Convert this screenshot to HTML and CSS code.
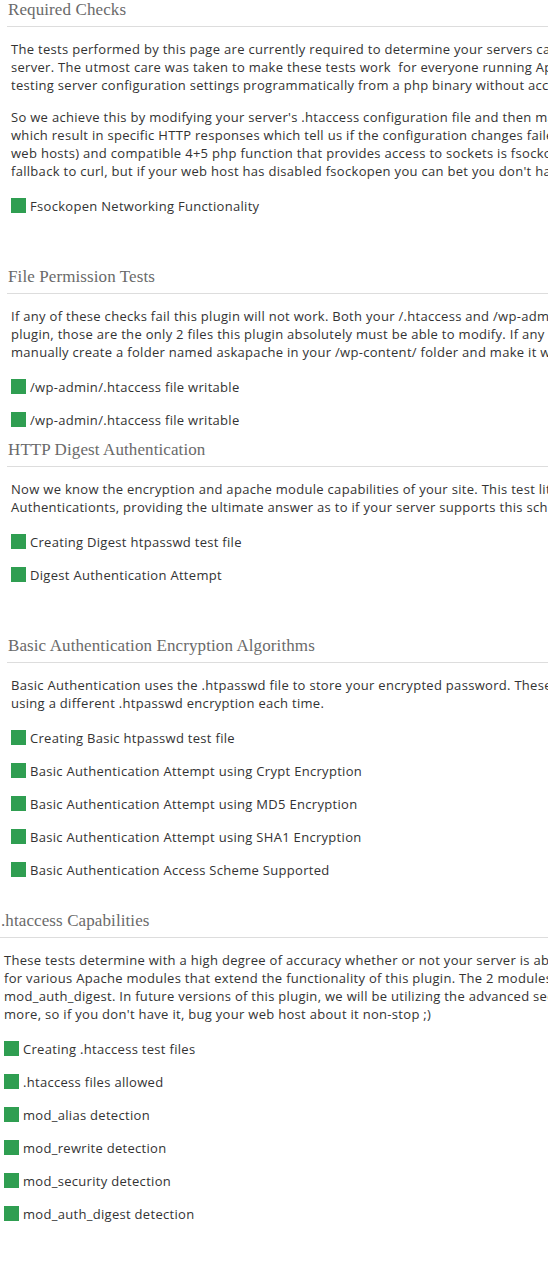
FILE: index.html
```html
<!DOCTYPE html>
<html lang="en">
<head>
<meta charset="utf-8">
<title>AskApache Password Protect Tests</title>
<link rel="stylesheet" href="styles.css">
</head>
<body>
<div class="page">

  <section class="section">
    <h3 class="section-title">Required Checks</h3>
    <p class="para">The tests performed by this page are currently required to determine your servers capabilities to make sure that AskApache Password Protect will work on your<br>server. The utmost care was taken to make these tests work&nbsp; for everyone running Apache, no matter what host or configuration you are using, by<br>testing server configuration settings programmatically from a php binary without access to the main server configuration files.</p>
    <p class="para">So we achieve this by modifying your server's .htaccess configuration file and then making special HTTP requests to your server<br>which result in specific HTTP responses which tell us if the configuration changes failed or succeeded. (Not available on all<br>web hosts) and compatible 4+5 php function that provides access to sockets is fsockopen, which is required. This plugin will<br>fallback to curl, but if your web host has disabled fsockopen you can bet you don't have curl either.</p>
    <ul class="checks">
      <li class="check"><span class="box"></span>Fsockopen Networking Functionality</li>
    </ul>
  </section>

  <section class="section section--tight">
    <h3 class="section-title">File Permission Tests</h3>
    <p class="para">If any of these checks fail this plugin will not work. Both your /.htaccess and /wp-admin/.htaccess files must be writable for this<br>plugin, those are the only 2 files this plugin absolutely must be able to modify. If any of the checks fail you will need to<br>manually create a folder named askapache in your /wp-content/ folder and make it writable by the server.</p>
    <ul class="checks">
      <li class="check"><span class="box"></span>/wp-admin/.htaccess file writable</li>
      <li class="check"><span class="box"></span>/wp-admin/.htaccess file writable</li>
    </ul>
  </section>

  <section class="section">
    <h3 class="section-title">HTTP Digest Authentication</h3>
    <p class="para">Now we know the encryption and apache module capabilities of your site. This test literally attempts multiple Digest<br>Authenticationts, providing the ultimate answer as to if your server supports this scheme.</p>
    <ul class="checks">
      <li class="check"><span class="box"></span>Creating Digest htpasswd test file</li>
      <li class="check"><span class="box"></span>Digest Authentication Attempt</li>
    </ul>
  </section>

  <section class="section section--mid">
    <h3 class="section-title">Basic Authentication Encryption Algorithms</h3>
    <p class="para">Basic Authentication uses the .htpasswd file to store your encrypted password. These checks perform an authentication attempt<br>using a different .htpasswd encryption each time.</p>
    <ul class="checks">
      <li class="check"><span class="box"></span>Creating Basic htpasswd test file</li>
      <li class="check"><span class="box"></span>Basic Authentication Attempt using Crypt Encryption</li>
      <li class="check"><span class="box"></span>Basic Authentication Attempt using MD5 Encryption</li>
      <li class="check"><span class="box"></span>Basic Authentication Attempt using SHA1 Encryption</li>
      <li class="check"><span class="box"></span>Basic Authentication Access Scheme Supported</li>
    </ul>
  </section>

  <section class="section section--outdent">
    <h3 class="section-title">.htaccess Capabilities</h3>
    <p class="para">These tests determine with a high degree of accuracy whether or not your server is able to handle .htaccess files and also checks<br>for various Apache modules that extend the functionality of this plugin. The 2 modules that are required are mod_rewrite and<br>mod_auth_digest. In future versions of this plugin, we will be utilizing the advanced security features of mod_security even<br>more, so if you don't have it, bug your web host about it non-stop ;)</p>
    <ul class="checks">
      <li class="check"><span class="box"></span>Creating .htaccess test files</li>
      <li class="check"><span class="box"></span>.htaccess files allowed</li>
      <li class="check"><span class="box"></span>mod_alias detection</li>
      <li class="check"><span class="box"></span>mod_rewrite detection</li>
      <li class="check"><span class="box"></span>mod_security detection</li>
      <li class="check"><span class="box"></span>mod_auth_digest detection</li>
    </ul>
  </section>

</div>
</body>
</html>
```
FILE: styles.css
```css
html, body {
  margin: 0;
  padding: 0;
  background: #ffffff;
}

body {
  overflow: hidden;
  font-family: "Open Sans", "DejaVu Sans", sans-serif;
  font-size: 13px;
  letter-spacing: 0.3px;
  color: #333333;
}

.page {
  width: 960px;
  padding-left: 7px;
}

.section {
  margin: 0 0 45px;
}

.section--tight {
  margin-bottom: 4px;
}

.section--mid {
  margin-bottom: 25px;
}

.section--outdent {
  margin-left: -7px;
}

.section-title {
  margin: 0 0 13px;
  padding: 0 0 6px 1px;
  font-family: "Liberation Serif", "DejaVu Serif", serif;
  font-weight: normal;
  font-size: 17px;
  line-height: 20px;
  letter-spacing: 0.1px;
  color: #6a6a6a;
  border-bottom: 1px solid #dddddd;
}

.para {
  margin: 0 0 14px;
  padding-left: 4px;
  line-height: 18px;
  white-space: nowrap;
}

.checks {
  list-style: none;
  margin: -5px 0 0;
  padding: 0 0 0 4px;
}

.check {
  display: flex;
  align-items: center;
  gap: 4px;
  height: 33px;
  white-space: nowrap;
}

.box {
  flex: none;
  width: 15px;
  height: 15px;
  background: #2f9e51;
}
```
